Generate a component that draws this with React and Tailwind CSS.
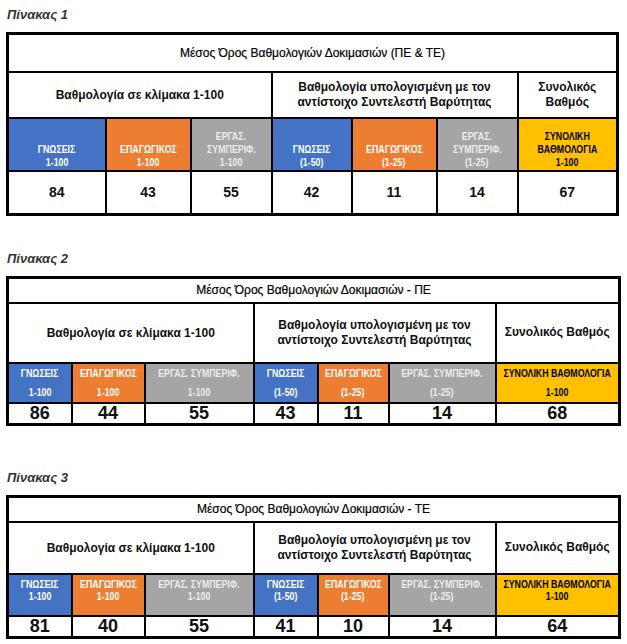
import React from "react";

const C = {
  blue: "bg-[#4472c4] text-white",
  orange: "bg-[#ed7d31] text-white",
  gray: "bg-[#a5a5a5] text-[#ececec]",
  yellow: "bg-[#ffc000] text-black",
};

const tables = [
  {
    label: "Πίνακας 1",
    title: "Μέσος Όρος Βαθμολογιών Δοκιμασιών (ΠΕ & ΤΕ)",
    cols: [98, 85, 81, 80, 85, 81, 100],
    total: ["Συνολικός", "Βαθμός"],
    heads: [
      ["ΓΝΩΣΕΙΣ", "1-100"],
      ["ΕΠΑΓΩΓΙΚΟΣ", "1-100"],
      ["ΕΡΓΑΣ.", "ΣΥΜΠΕΡΙΦ.", "1-100"],
      ["ΓΝΩΣΕΙΣ", "(1-50)"],
      ["ΕΠΑΓΩΓΙΚΟΣ", "(1-25)"],
      ["ΕΡΓΑΣ.", "ΣΥΜΠΕΡΙΦ.", "(1-25)"],
      ["ΣΥΝΟΛΙΚΗ", "ΒΑΘΜΟΛΟΓΙΑ", "1-100"],
    ],
    values: [84, 43, 55, 42, 11, 14, 67],
    variant: 1,
  },
  {
    label: "Πίνακας 2",
    title: "Μέσος Όρος Βαθμολογιών Δοκιμασιών -  ΠΕ",
    cols: [64, 73, 109, 64, 71, 107, 124],
    total: ["Συνολικός Βαθμός"],
    heads: [
      ["ΓΝΩΣΕΙΣ", "1-100"],
      ["ΕΠΑΓΩΓΙΚΟΣ", "1-100"],
      ["ΕΡΓΑΣ. ΣΥΜΠΕΡΙΦ.", "1-100"],
      ["ΓΝΩΣΕΙΣ", "(1-50)"],
      ["ΕΠΑΓΩΓΙΚΟΣ", "(1-25)"],
      ["ΕΡΓΑΣ. ΣΥΜΠΕΡΙΦ.", "(1-25)"],
      ["ΣΥΝΟΛΙΚΗ ΒΑΘΜΟΛΟΓΙΑ", "1-100"],
    ],
    values: [86, 44, 55, 43, 11, 14, 68],
    variant: 2,
  },
  {
    label: "Πίνακας 3",
    title: "Μέσος Όρος Βαθμολογιών Δοκιμασιών - ΤΕ",
    cols: [64, 73, 109, 64, 71, 107, 124],
    total: ["Συνολικός Βαθμός"],
    heads: [
      ["ΓΝΩΣΕΙΣ", "1-100"],
      ["ΕΠΑΓΩΓΙΚΟΣ", "1-100"],
      ["ΕΡΓΑΣ. ΣΥΜΠΕΡΙΦ.", "1-100"],
      ["ΓΝΩΣΕΙΣ", "(1-50)"],
      ["ΕΠΑΓΩΓΙΚΟΣ", "(1-25)"],
      ["ΕΡΓΑΣ. ΣΥΜΠΕΡΙΦ.", "(1-25)"],
      ["ΣΥΝΟΛΙΚΗ ΒΑΘΜΟΛΟΓΙΑ", "1-100"],
    ],
    values: [81, 40, 55, 41, 10, 14, 64],
    variant: 3,
  },
];

const colors = [C.blue, C.orange, C.gray, C.blue, C.orange, C.gray, C.yellow];

// row sizes per table, read off the reference
const layout = {
  1: { title: "h-[38px]", head: "h-[46px]", color: "h-[53px] align-bottom pb-[1px]", lines: "leading-[13px]", value: "h-[44px] text-[14px] leading-none", gap: "" },
  2: { title: "h-[25px]", head: "h-[60px]", color: "h-[39px] align-middle", lines: "leading-[19px]", value: "h-[22px] text-[18px] leading-none", gap: "mt-[28px]" },
  3: { title: "h-[25px]", head: "h-[52px]", color: "h-[42px] align-top pt-[3px]", lines: "leading-[12px]", value: "h-[22px] text-[18px] leading-none", gap: "mt-[37px]" },
};

function ScoreTable({ t }) {
  const L = layout[t.variant];
  return (
    <div className={L.gap}>
      <div className="h-[32px] pt-[5px] px-[1px] text-[13px] font-bold italic text-[#333]">{t.label}</div>
      <table className="table-fixed border-collapse border-[3px] border-black text-center" style={{ width: t.cols.reduce((a, b) => a + b, 0) }}>
        <colgroup>
          {t.cols.map((w, i) => (
            <col key={i} style={{ width: w }} />
          ))}
        </colgroup>
        <tbody>
          <tr className={L.title}>
            <td colSpan={7} className="border-2 border-black text-[12px] text-black [-webkit-text-stroke:0.2px_black]">
              {t.title}
            </td>
          </tr>
          <tr className={L.head}>
            <td colSpan={3} className="border-2 border-black text-[12px] font-bold text-[#111]">
              Βαθμολογία σε κλίμακα 1-100
            </td>
            <td colSpan={3} className="border-2 border-black text-[12px] font-bold leading-[15px] text-[#111]">
              Βαθμολογία υπολογισμένη με τον
              <br />
              αντίστοιχο Συντελεστή Βαρύτητας
            </td>
            <td className="border-2 border-black text-[12px] font-bold leading-[15px] text-[#111]">
              {t.total.map((s, i) => (
                <div key={i}>{s}</div>
              ))}
            </td>
          </tr>
          <tr className={L.color}>
            {t.heads.map((h, i) => (
              <td key={i} className={`border-2 border-black p-0 text-[11px] font-bold ${L.lines} ${colors[i]} ${L.color}`}>
                {h.map((s, j) => (
                  <div key={j} className="flex justify-center">
                    <span className="whitespace-nowrap scale-x-[0.8]">{s}</span>
                  </div>
                ))}
              </td>
            ))}
          </tr>
          <tr className={L.value}>
            {t.values.map((v, i) => (
              <td key={i} className={`border-2 border-black p-0 font-bold text-[#111] ${L.value}`}>
                {v}
              </td>
            ))}
          </tr>
        </tbody>
      </table>
    </div>
  );
}

export default function App() {
  return (
    <div className="w-[627px] h-[644px] overflow-hidden bg-white pl-[6px]" style={{ fontFamily: '"Liberation Sans", Arial, sans-serif' }}>
      {tables.map((t, i) => (
        <ScoreTable key={i} t={t} />
      ))}
    </div>
  );
}
